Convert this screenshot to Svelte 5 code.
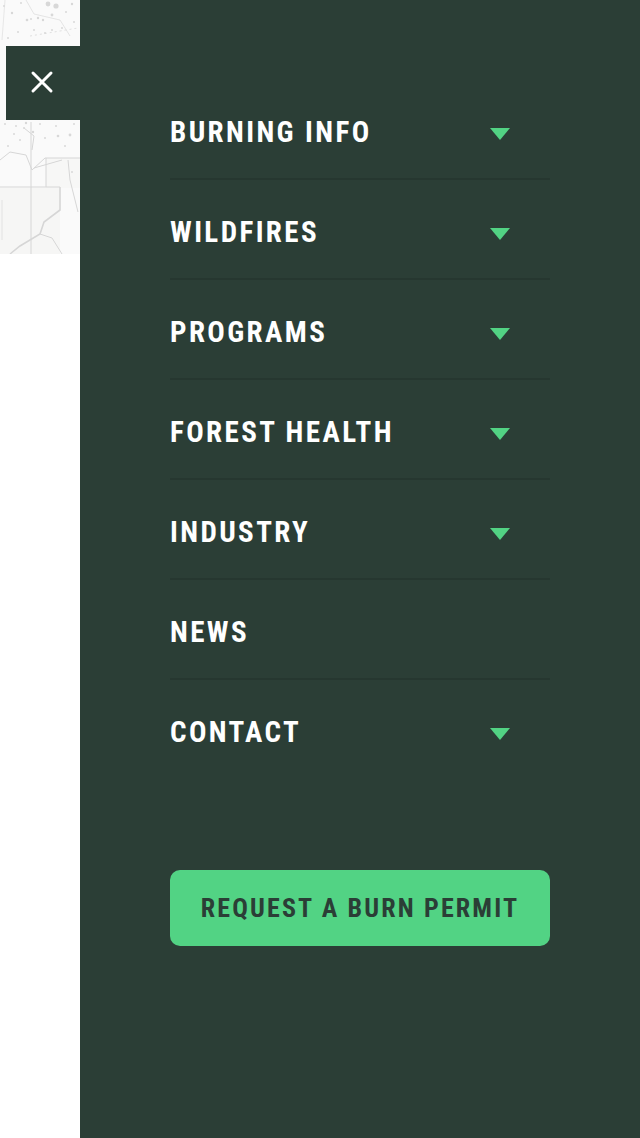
<script>
  const items = [
    { label: 'BURNING INFO', caret: true },
    { label: 'WILDFIRES', caret: true },
    { label: 'PROGRAMS', caret: true },
    { label: 'FOREST HEALTH', caret: true },
    { label: 'INDUSTRY', caret: true },
    { label: 'NEWS', caret: false },
    { label: 'CONTACT', caret: true }
  ];
  const specks = [
    [4,6,1],[12,13,1.2],[21,3,1],[27,20,1.3],[31,19,1],[38,18,1.2],[43,20,1.2],[48,4,2.4],[56,6,2.6],[52,15,1.4],[66,12,1],[72,4,1.2],[18,32,1],[34,30,1],[45,33,1],[52,30,1],[62,28,1],[74,22,1],[8,38,1],
    [5,124,1],[16,126,1],[26,123,1.2],[24,128,1],[33,132,1.2],[40,124,1],[58,136,1.3],[70,135,1.4],[56,126,1],[74,124,1],[14,134,1],[45,138,1],[65,146,1],[72,172,1],[8,146,1],[20,140,1]
  ];
</script>

<div class="page">
  <div class="rail">
    <svg class="map" width="80" height="254" viewBox="0 0 80 254" fill="none">
      <rect width="80" height="254" fill="#fafafa" />
      <rect y="188" width="60" height="66" fill="#f6f6f5" />
      <rect x="46" y="158" width="34" height="30" fill="#f7f7f6" />
      <g class="soft">
        <g stroke="#d6d6d6" stroke-width="1">
          <path d="M0 160 L10 152 L26 155 L32 170 L45 158 L80 158" />
          <path d="M31 122 L31 254" />
          <path d="M0 187 L60 187" />
          <path d="M46 158 L46 187" />
          <path d="M60 187 L60 210 L44 222 L40 234 L20 246 L10 254" stroke-width="1.6" />
          <path d="M40 234 L52 238 L62 254" />
          <path d="M68 160 L70 180 L78 212" />
          <path d="M24 128 L34 136 L32 150" />
          <path d="M34 168 L48 164 L62 160" />
          <path d="M26 0 L34 14 L60 20 L70 36" opacity=".6" />
          <path d="M30 36 L78 28" opacity=".7" stroke-dasharray="2 3" />
          <path d="M2 200 L2 240" opacity=".6" />
          <path d="M5 0 L2 40" opacity=".5" />
        </g>
        <g fill="#d8d8d8">
          {#each specks as s}
            <circle cx={s[0]} cy={s[1]} r={s[2]} />
          {/each}
        </g>
      </g>
    </svg>
    <button class="close" aria-label="Close menu">
      <svg width="26" height="26" viewBox="0 0 26 26" fill="none" stroke="#fff" stroke-width="3" stroke-linecap="round">
        <path d="M4 4 L22 22 M22 4 L4 22" />
      </svg>
    </button>
  </div>

  <aside class="drawer">
    <nav>
      {#each items as item}
        <a class="row" href="#top">
          <span class="label">{item.label}</span>
          {#if item.caret}<span class="caret"></span>{/if}
        </a>
      {/each}
    </nav>
    <a class="cta" href="#top"><span class="cta-text">REQUEST A BURN PERMIT</span></a>
  </aside>
</div>

<style>
  :global(body) { margin: 0; background: #fff; }
  .page { display: flex; width: 640px; height: 1138px; overflow: hidden; }
  .rail { position: relative; width: 80px; flex: none; }
  .map { display: block; }
  .soft { filter: blur(0.5px); }
  .close {
    position: absolute; left: 6px; top: 46px; width: 74px; height: 74px;
    background: #2b3e36; border: 0; margin: 0;
    display: flex; align-items: center; justify-content: center; padding: 0 2px 2px 0;
  }
  .close svg { display: block; }
  .drawer {
    flex: 1; background: #2b3e36; box-sizing: border-box;
    padding: 80px 90px 0;
    font-family: Roboto, "Liberation Sans", sans-serif;
  }
  nav { display: flex; flex-direction: column; }
  .row {
    display: flex; align-items: center; justify-content: space-between;
    height: 100px; box-sizing: border-box; padding: 6px 40px 0 0;
    border-bottom: 2px solid #263730; text-decoration: none;
  }
  .row:last-child { border-bottom-color: transparent; }
  .label {
    color: #fff; font-size: 29px; font-weight: 700; letter-spacing: 2.4px;
    font-stretch: 75%; line-height: 32px;
  }
  .caret {
    width: 0; height: 0; border-left: 10px solid transparent; border-right: 10px solid transparent;
    border-top: 12px solid #52d384; margin-top: 4px;
  }
  .cta {
    display: flex; align-items: center; justify-content: center;
    height: 76px; margin-top: 90px; border-radius: 10px; background: #52d384;
    text-decoration: none;
  }
  .cta-text {
    color: #2b3e36; font-size: 26px; font-weight: 700; letter-spacing: 2.15px; font-stretch: 75%;
  }
</style>
